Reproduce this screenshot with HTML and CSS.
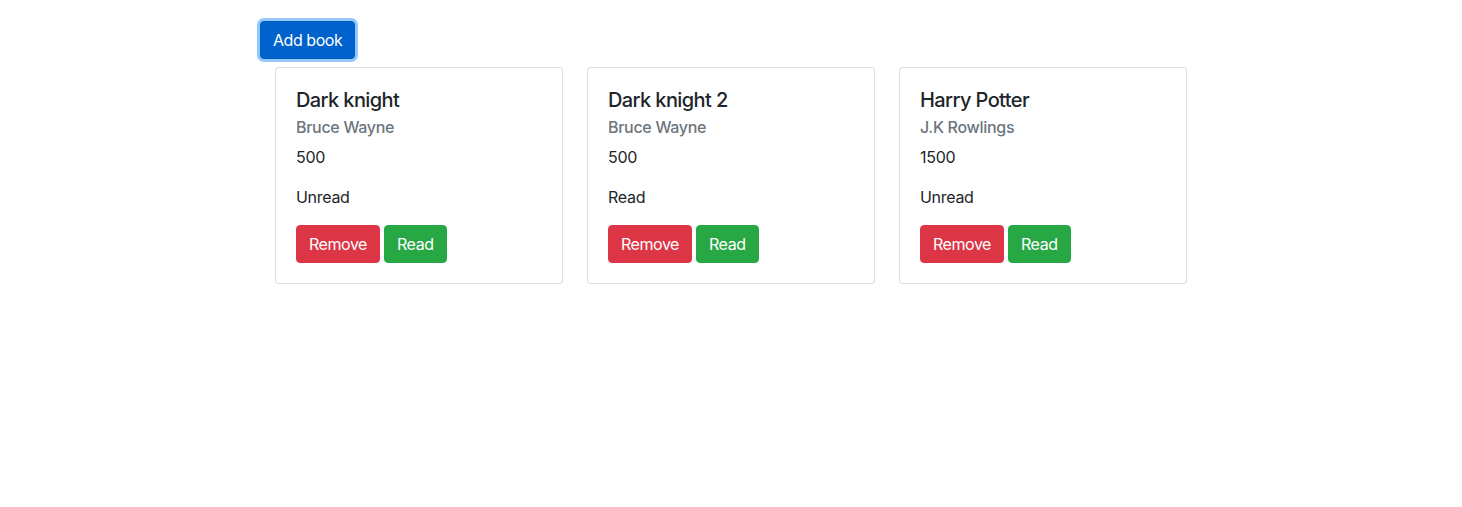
FILE: index.html
```html
<!DOCTYPE html>
<html lang="en">
<head>
<meta charset="utf-8">
<title>Library</title>
<link rel="stylesheet" href="styles.css">
</head>
<body>
<div class="container">
  <div class="toolbar">
    <button class="btn btn-primary btn-focus" type="button">Add book</button>
  </div>
  <div class="cards">
    <div class="card">
      <div class="card-body">
        <h5 class="card-title">Dark knight</h5>
        <h6 class="card-subtitle">Bruce Wayne</h6>
        <p class="card-text">500</p>
        <p class="card-text">Unread</p>
        <div class="actions">
          <button class="btn btn-danger" type="button">Remove</button>
          <button class="btn btn-success" type="button">Read</button>
        </div>
      </div>
    </div>
    <div class="card">
      <div class="card-body">
        <h5 class="card-title">Dark knight 2</h5>
        <h6 class="card-subtitle">Bruce Wayne</h6>
        <p class="card-text">500</p>
        <p class="card-text">Read</p>
        <div class="actions">
          <button class="btn btn-danger" type="button">Remove</button>
          <button class="btn btn-success" type="button">Read</button>
        </div>
      </div>
    </div>
    <div class="card">
      <div class="card-body">
        <h5 class="card-title">Harry Potter</h5>
        <h6 class="card-subtitle">J.K Rowlings</h6>
        <p class="card-text">1500</p>
        <p class="card-text">Unread</p>
        <div class="actions">
          <button class="btn btn-danger" type="button">Remove</button>
          <button class="btn btn-success" type="button">Read</button>
        </div>
      </div>
    </div>
  </div>
</div>
</body>
</html>
```

FILE: styles.css
```css
* { box-sizing: border-box; }

body {
  margin: 0;
  font-family: Inter, "Liberation Sans", Arial, sans-serif;
  font-size: 16px;
  line-height: 1.5;
  color: #212529;
  background: #fff;
  letter-spacing: -0.3px;
}

.container {
  width: 942px;
  margin: 0 auto;
  padding-top: 21px;
}

.toolbar {
  display: flex;
}

.cards {
  display: flex;
  gap: 24px;
  padding: 0 15px;
  margin-top: 8px;
  align-items: flex-start;
}

.card {
  width: 288px;
  border: 1px solid rgba(0, 0, 0, 0.125);
  border-radius: 4px;
  background: #fff;
}

.card-body {
  padding: 20px;
}

.card-title {
  margin: 0 0 12px;
  font-size: 20px;
  font-weight: 500;
  line-height: 1.2;
  letter-spacing: -0.6px;
}

.card-subtitle {
  margin: -6px 0 8px;
  font-size: 16px;
  font-weight: 500;
  line-height: 1.2;
  color: #6c757d;
  letter-spacing: -0.3px;
}

.card-text {
  margin: 0 0 16px;
}

.actions {
  display: flex;
  gap: 4px;
}

.btn {
  display: inline-block;
  font-family: inherit;
  font-size: 16px;
  font-weight: 400;
  line-height: 1.5;
  padding: 6px 12px;
  border: 1px solid transparent;
  border-radius: 4px;
  color: #fff;
  cursor: pointer;
  letter-spacing: -0.45px;
}

.btn-primary {
  background: #0062cc;
  border-color: #005cbf;
}

.btn-focus {
  box-shadow: 0 0 0 3px rgba(38, 143, 255, 0.5);
}

.btn-danger {
  background: #dc3545;
  border-color: #dc3545;
}

.btn-success {
  background: #28a745;
  border-color: #28a745;
}
```
